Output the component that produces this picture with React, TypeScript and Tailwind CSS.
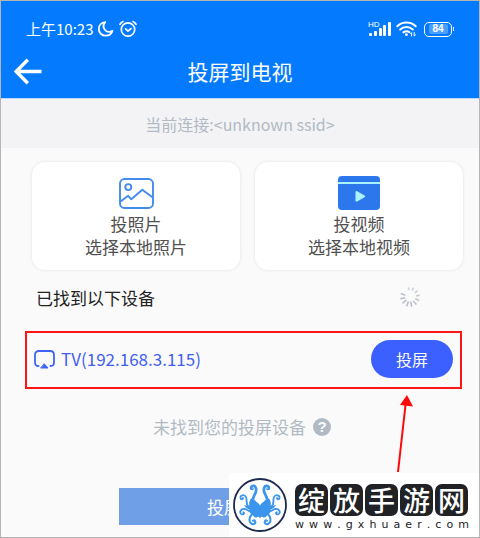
import type { ReactNode } from "react";

function StatusBar() {
  return (
    <div className="flex h-[43px] items-center justify-between pt-[13px] pr-[25px] pl-[25px]">
      <div className="flex items-center">
        <span className="text-[15px] leading-5">上午10:23</span>
        <svg className="ml-1 h-[18px] w-[17px]" viewBox="0 0 17 18" fill="none" stroke="currentColor" strokeWidth="1.8" strokeLinejoin="round" aria-hidden="true">
          <path d="M8.3 2.2C4.4 2.6 1.8 5.3 1.8 8.9C1.8 12.8 4.8 15.7 8.6 15.7C12 15.7 14.7 13.8 15.5 10.8C12.8 12.4 9.6 11.9 7.8 9.7C6 7.4 6.3 4.4 8.3 2.2Z" />
        </svg>
        <svg className="ml-1 h-[18px] w-5" viewBox="0 0 20 18" fill="none" stroke="currentColor" strokeWidth="1.7" strokeLinecap="round" strokeLinejoin="round" aria-hidden="true">
          <circle cx="10" cy="9.5" r="6.7" />
          <path d="M7.6 8.9L10 11.2L13 8.6M2 4.3C2.8 3 3.7 2.2 5 1.6M15 1.6C16.3 2.2 17.2 3 18 4.3" />
        </svg>
      </div>
      <div className="flex items-center gap-[5px]">
        <div className="relative h-4 w-[23px]">
          <span className="absolute top-0 left-0 font-['Liberation_Sans',sans-serif] text-[8px] leading-[7px]">HD</span>
          <svg className="h-4 w-[23px]" viewBox="0 0 23 16" fill="currentColor" aria-hidden="true">
            <rect x="1" y="12" width="3" height="3" rx="1" />
            <rect x="6" y="10" width="3" height="5" rx="1" />
            <rect x="11" y="7" width="3" height="8" rx="1" />
            <rect x="15" y="4" width="3" height="11" rx="1" />
            <rect x="20" y="1" width="3" height="14" rx="1" />
          </svg>
        </div>
        <svg className="h-4 w-[21px]" viewBox="0 0 21 16" fill="none" stroke="currentColor" strokeWidth="2" strokeLinecap="round" aria-hidden="true">
          <path d="M1.3 5.3C6.3 .3 14.7 .3 19.7 5.3M4.2 8.5C7.8 5.2 13.2 5.2 16.8 8.5M7.4 11.4C9.2 10 11.8 10 13.4 11.2" />
          <circle cx="10.4" cy="13.7" r="1.4" fill="currentColor" stroke="none" />
          <path d="M15.6 15V11.6L14.6 12.6M18.2 11.5V15L19.4 14" strokeWidth="1" />
        </svg>
        <div className="ml-[2px] flex items-center">
          <div className="flex h-[15px] w-7 items-center justify-center rounded-[5px] border border-white p-px">
            <span className="w-[19px] rounded-xs bg-[#4b9ffb] text-center font-['Liberation_Sans',sans-serif] text-[10px] leading-[10px] font-bold">84</span>
          </div>
          <span className="ml-px h-1 w-px bg-white" />
        </div>
      </div>
    </div>
  );
}

function CastCard({ icon, title, detail }: { icon: ReactNode; title: string; detail: string }) {
  return (
    <button type="button" className="flex flex-1 flex-col items-center rounded-[13px] bg-white pt-[13px] pb-3 text-[17px] leading-[23px] text-[#505050] shadow-[0_0_3px_#dedede]">
      <span className="mb-px flex h-9 items-center">{icon}</span>
      <span>{title}</span>
      <span>{detail}</span>
    </button>
  );
}

function PhotoIcon() {
  return (
    <svg className="h-[31px] w-[35px]" viewBox="0 0 35 31" fill="none" stroke="#438bec" strokeWidth="1.9" strokeLinejoin="round" aria-hidden="true">
      <rect x="1" y="1" width="33" height="29" rx="4.5" />
      <circle cx="9.3" cy="9.1" r="3" />
      <path d="M1.5 23.5L9.2 17.8L12.3 21.3L23.3 11.8L33.8 19.4" />
    </svg>
  );
}

function VideoIcon() {
  return (
    <svg className="h-9 w-[42px]" viewBox="0 0 42 36" aria-hidden="true">
      <rect y="1" width="42" height="34" rx="4" fill="#2d77ed" />
      <rect y="7" width="42" height="2" fill="#a8f3ff" />
      <path d="M17.5 17.2C17.5 16.2 18.4 15.8 19.2 16.3L26.6 20.6C27.4 21.1 27.4 21.7 26.6 22.2L19.2 26.5C18.4 27 17.5 26.6 17.5 25.6Z" fill="#a8f3ff" />
    </svg>
  );
}

const spokes = [0.35, 0.45, 0.55, 0.6, 0.75, 0.85, 1, 1, 1, 0.95, 0.9, 0.3];

function Spinner() {
  return (
    <svg className="size-5" viewBox="-10 -10 20 20" stroke="#b9bfcb" strokeWidth="1.6" strokeLinecap="round" role="status" aria-label="搜索中">
      {spokes.map((strength, i) =>
        i === 11 ? null : (
          <line key={i} x1="0" x2="0" y1={-9.2} y2={-9.2 + 4 * strength} opacity={0.5 + strength / 2} transform={`rotate(${i * 30 - 10})`} />
        ),
      )}
    </svg>
  );
}

function OctopusLogo() {
  return (
    <svg className="size-[54px] shrink-0" viewBox="0 0 54 54" fill="none" aria-hidden="true">
      <circle cx="27" cy="27" r="26" stroke="#1d2a50" strokeWidth="1.8" />
      <path d="M27 27.5C25.5 24.5 23 24 22.3 22.5L18 20.5C16.2 23 16 25.5 16.4 27.5C14.5 28.5 12.5 27.5 11 27C12.5 30 15 31 16.5 31.5C15.5 33.5 17 36 19.5 36.5C20.5 38.5 22 40 23.5 39.5C25 38.5 26 38.5 27 40.5C28 38.5 29 38.5 30.5 39.5C32 40 33.5 38.5 34.5 36.5C37 36 38.5 33.5 37.5 31.5C39 31 41.5 30 43 27C41.5 27.5 39.5 28.5 37.6 27.5C38 25.5 37.8 23 36 20.5L31.7 22.5C31 24 28.5 24.5 27 27.5Z" fill="#3b95ec" />
      <g stroke="#3b95ec" strokeLinecap="round">
        <g id="arms">
          <path d="M20 24C18.5 18.5 24.5 15.5 23 10.3C22 6.8 17.5 7.3 18.2 10.6" strokeWidth="2.7" />
          <path d="M18.2 10.6C18.6 12 20.2 11.8 20.2 10.6" strokeWidth="1.2" />
          <path d="M15.5 28.5C12.5 26.5 14.5 22.5 13 19.2C11.5 16 7 17 7.5 20C7.9 21.8 10.2 21.5 10 20" strokeWidth="1.8" />
          <path d="M18 33C14.5 33.5 14 30.8 11 30.8C7 31 6 35.6 9 36.4C11 36.8 11.7 34.9 10.3 34.2" strokeWidth="1.8" />
          <path d="M21 36C17.5 36 17 38.5 16.6 41C16 44.5 19 47.4 21.5 45.7C23.3 44 21.8 41.8 20 42.7" strokeWidth="2.1" />
        </g>
        <use href="#arms" transform="matrix(-1 0 0 1 54 0)" />
      </g>
    </svg>
  );
}

function SiteMark() {
  return (
    <div className="absolute right-0 bottom-0 flex h-16 w-[250px] items-start gap-2 bg-white pt-[5px] pl-1 text-[#202226]">
      <OctopusLogo />
      <div className="w-[174px] pt-[6px]">
        <div className="flex gap-[2px] font-['Noto_Sans_CJK_SC',sans-serif] text-[27px] leading-8 text-white">
          {"绽放手游网".split("").map((glyph) => (
            <span key={glyph} className="h-8 w-[33px] rounded-[7px] bg-[#202226] text-center font-medium">{glyph}</span>
          ))}
        </div>
        <div className="mt-px flex justify-between font-['DejaVu_Sans',sans-serif] text-[11px] leading-4">
          {"www.gxhuaer.com".split("").map((letter, i) => (
            <span key={i}>{letter}</span>
          ))}
        </div>
      </div>
    </div>
  );
}

export default function App() {
  return (
    <div className="relative min-h-screen border border-[#b5b5b5] bg-[#fafafa] font-['Noto_Sans_CJK_SC',sans-serif]">
      <header className="h-[98px] border-b border-[#b9d8fa] bg-[#047bff] text-white">
        <StatusBar />
        <div className="relative flex h-[54px] items-center justify-center">
          <button type="button" aria-label="返回" className="absolute left-[13px]">
            <svg className="h-[27px] w-7" viewBox="0 0 28 27" fill="none" stroke="currentColor" strokeWidth="3.4" aria-hidden="true">
              <path d="M27.5 13.5H2.5M13.8 1.8L2.2 13.5L13.8 25.2" />
            </svg>
          </button>
          <h1 className="text-[21px] leading-7">投屏到电视</h1>
        </div>
      </header>
      <p className="flex h-[49px] items-center justify-center bg-[#f3f3f6] text-base text-[#b1bac4]">
        当前连接:&lt;unknown ssid&gt;
      </p>
      <main>
        <section className="flex gap-[15px] pt-[14px] pr-4 pl-[31px]">
          <CastCard icon={<PhotoIcon />} title="投照片" detail="选择本地照片" />
          <CastCard icon={<VideoIcon />} title="投视频" detail="选择本地视频" />
        </section>
        <div className="flex h-[61px] items-center justify-between pr-[59px] pl-[35px]">
          <h2 className="pb-[6px] text-[17px] leading-6 text-[#222222]">已找到以下设备</h2>
          <div className="pb-[8px]"><Spinner /></div>
        </div>
        <section className="relative mr-[17px] ml-6 flex h-[58px] items-center border-2 border-[#fb1519] pr-[7px] pb-[2px] pl-[7px]">
          <svg className="h-[19px] w-[21px]" viewBox="0 0 21 19" fill="none" stroke="#3f63f6" strokeWidth="1.8" strokeLinecap="round" aria-hidden="true">
            <path d="M4.5 16C2.2 16 1 14.7 1 12.5V5C1 2.6 2.4 1 5 1H16C18.6 1 20 2.6 20 5V12.5C20 14.7 18.8 16 16.5 16" />
            <path d="M10.5 14L14 18H7Z" fill="#3f63f6" strokeWidth="1" strokeLinejoin="round" />
          </svg>
          <span className="ml-[6px] flex-1 text-[17px] leading-6 text-[#4160ef]">TV(192.168.3.115)</span>
          <button type="button" className="h-[38px] w-[82px] rounded-full bg-[#3c5fff] text-base text-white">投屏</button>
          <svg className="absolute top-[62px] right-[46px] h-[78px] w-5" viewBox="0 0 20 78" aria-hidden="true">
            <path d="M4 77L11.5 10" stroke="#ff0808" strokeWidth="2" />
            <path d="M13 0L19 11.5L6 10Z" fill="#ff0808" />
          </svg>
        </section>
        <a href="#help" className="flex items-center justify-center gap-[7px] pt-[26px] pl-1 text-[17px] leading-6 text-[#b1bac4]">
          未找到您的投屏设备
          <span className="flex size-[18px] items-center justify-center rounded-full bg-[#b1bac4] font-['Liberation_Sans',sans-serif] text-[15px] leading-[18px] font-bold text-[#fafafa]">?</span>
        </a>
        <button type="button" className="mx-auto mt-[49px] block h-[37px] w-[242px] bg-[#6f9fe6] pl-[88px] text-left text-[17px] text-white">
          投屏
        </button>
      </main>
      <SiteMark />
    </div>
  );
}
